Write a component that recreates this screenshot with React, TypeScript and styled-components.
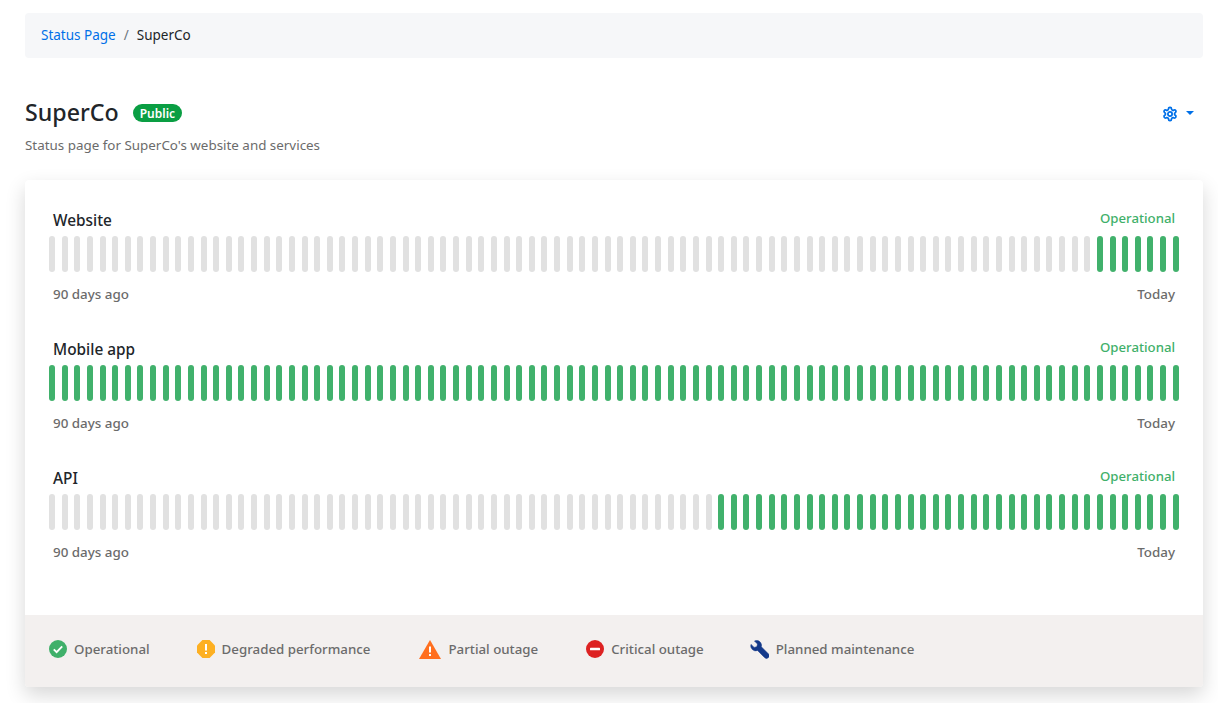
import React from "react";
import styled, { createGlobalStyle } from "styled-components";

const GlobalStyle = createGlobalStyle`
  * {
    box-sizing: border-box;
  }
  body {
    margin: 0;
    background: #ffffff;
    font-family: "Noto Sans", "Liberation Sans", sans-serif;
    color: #212529;
  }
`;

const Page = styled.div`
  width: 1218px;
  height: 703px;
  overflow: hidden;
  padding: 13px 15px 0 25px;
`;

const Breadcrumb = styled.nav`
  display: flex;
  align-items: center;
  height: 45px;
  padding: 0 16px 2px;
  background: #f6f7f9;
  border-radius: 4px;
  font-size: 13.5px;
`;

const Crumb = styled.a`
  color: #0070e8;
`;

const Slash = styled.span`
  color: #6c757d;
  padding: 0 8px;
`;

const Current = styled.span`
  color: #212529;
`;

const Header = styled.header`
  display: flex;
  justify-content: space-between;
  margin-top: 40px;
  height: 82px;
`;

const TitleRow = styled.div`
  display: flex;
  align-items: center;
  gap: 14px;
  height: 30px;
`;

const Title = styled.h1`
  margin: -2px 0 0;
  font-size: 23.2px;
  font-weight: 500;
  line-height: 30px;
  color: #212529;
`;

const Badge = styled.span`
  display: inline-flex;
  align-items: center;
  height: 18px;
  padding: 0 7px;
  border-radius: 9px;
  background: #0a9e43;
  color: #ffffff;
  font-size: 12px;
  font-weight: 600;
`;

const Description = styled.p`
  margin: 8px 0 0;
  font-size: 13.4px;
  line-height: 18px;
  color: #6b6b6b;
`;

const SettingsButton = styled.div`
  display: flex;
  align-items: center;
  gap: 8px;
  height: 18px;
  margin: 7px 9px 0 0;
  color: #0070e8;
`;

const Caret = styled.span`
  width: 0;
  height: 0;
  border-left: 4px solid transparent;
  border-right: 4px solid transparent;
  border-top: 4px solid #0070e8;
  margin-top: -3px;
`;

const Card = styled.section`
  background: #ffffff;
  border-radius: 4px;
  box-shadow: 0 8px 20px rgba(0, 0, 0, 0.16);
  overflow: hidden;
`;

const CardBody = styled.div`
  height: 435px;
  padding: 27px 24px 0;
  display: flex;
  flex-direction: column;
  gap: 29px;
`;

const Service = styled.div`
  height: 100px;
`;

const ServiceHead = styled.div`
  display: flex;
  justify-content: space-between;
  padding: 0 4px;
  height: 29px;
`;

const ServiceName = styled.div`
  font-size: 15.4px;
  font-weight: 500;
  line-height: 28px;
  color: #212529;
`;

const ServiceState = styled.div`
  font-size: 13.2px;
  font-weight: 500;
  line-height: 22px;
  color: #3fb06a;
`;

const Bars = styled.div`
  display: flex;
  justify-content: space-between;
  height: 36px;
`;

const Bar = styled.div<{ $on: boolean }>`
  width: 6px;
  height: 36px;
  border-radius: 3px;
  background: ${(props) => (props.$on ? "#41b16c" : "#e1e1e1")};
`;

const ServiceFoot = styled.div`
  display: flex;
  justify-content: space-between;
  padding: 0 4px;
  margin-top: 13px;
  font-size: 13.4px;
  font-weight: 500;
  line-height: 18px;
  color: #6b6b6b;
`;

const Legend = styled.footer`
  display: flex;
  align-items: center;
  height: 72px;
  padding: 0 24px 4px;
  background: #f3f0ef;
`;

const LegendItem = styled.div<{ $gap: number }>`
  display: flex;
  align-items: center;
  gap: 7px;
  margin-right: ${(props) => props.$gap}px;
  font-size: 13.3px;
  font-weight: 500;
  color: #6b6b6b;
`;

const GearIcon = () => (
  <svg width="16" height="16" viewBox="0 0 24 24" fill="none" stroke="currentColor" strokeWidth="2.6" strokeLinejoin="round">
    <path d="M12.2 2h-.4a2 2 0 0 0-2 2v.2a2 2 0 0 1-1 1.7l-.4.3a2 2 0 0 1-2 0l-.2-.1a2 2 0 0 0-2.7.7l-.2.4a2 2 0 0 0 .7 2.7l.2.1a2 2 0 0 1 1 1.7v.5a2 2 0 0 1-1 1.7l-.2.1a2 2 0 0 0-.7 2.7l.2.4a2 2 0 0 0 2.7.7l.2-.1a2 2 0 0 1 2 0l.4.3a2 2 0 0 1 1 1.7v.2a2 2 0 0 0 2 2h.4a2 2 0 0 0 2-2v-.2a2 2 0 0 1 1-1.7l.4-.3a2 2 0 0 1 2 0l.2.1a2 2 0 0 0 2.7-.7l.2-.4a2 2 0 0 0-.7-2.7l-.2-.1a2 2 0 0 1-1-1.7v-.5a2 2 0 0 1 1-1.7l.2-.1a2 2 0 0 0 .7-2.7l-.2-.4a2 2 0 0 0-2.7-.7l-.2.1a2 2 0 0 1-2 0l-.4-.3a2 2 0 0 1-1-1.7V4a2 2 0 0 0-2-2z" />
    <circle cx="12" cy="12" r="3.2" />
  </svg>
);

const CheckIcon = () => (
  <svg width="18" height="18" viewBox="0 0 18 18">
    <circle cx="9" cy="9" r="9" fill="#3fb06a" />
    <path d="M4.8 9.4l2.8 2.8 5.6-5.8" fill="none" stroke="#ffffff" strokeWidth="1.9" />
  </svg>
);

const WarnIcon = () => (
  <svg width="18" height="18" viewBox="0 0 18 18">
    <path d="M5.4 0h7.2L18 5.4v7.2L12.6 18H5.4L0 12.6V5.4z" fill="#fdb022" />
    <rect x="8" y="4" width="2" height="6.5" fill="#ffffff" />
    <rect x="8" y="12" width="2" height="2" fill="#ffffff" />
  </svg>
);

const TriangleIcon = () => (
  <svg width="22" height="19" viewBox="0 0 22 19">
    <path d="M11 0L22 19H0z" fill="#ff6f1f" />
    <rect x="10" y="6.5" width="2" height="6" fill="#ffffff" />
    <rect x="10" y="14" width="2" height="2" fill="#ffffff" />
  </svg>
);

const BlockIcon = () => (
  <svg width="18" height="18" viewBox="0 0 18 18">
    <circle cx="9" cy="9" r="9" fill="#dd2222" />
    <rect x="4" y="7.7" width="10" height="2.6" rx="0.6" fill="#ffffff" />
  </svg>
);

const WrenchIcon = () => (
  <svg width="19" height="19" viewBox="0 0 19 19">
    <path
      d="M6.7 0.4a5 5 0 0 1 4.6 6.4l7 7a2.6 2.6 0 0 1-3.7 3.8l-7-7.1A5 5 0 0 1 1 4.4l3.1 3 2.8-.6.6-2.8-3-3a5 5 0 0 1 2.2-.6z"
      fill="#14398a"
      stroke="#14398a"
      strokeWidth="0.6"
    />
  </svg>
);

const services = [
  { name: "Website", active: 7 },
  { name: "Mobile app", active: 90 },
  { name: "API", active: 37 },
];

const legend = [
  { label: "Operational", icon: <CheckIcon />, gap: 47 },
  { label: "Degraded performance", icon: <WarnIcon />, gap: 49 },
  { label: "Partial outage", icon: <TriangleIcon />, gap: 48 },
  { label: "Critical outage", icon: <BlockIcon />, gap: 46 },
  { label: "Planned maintenance", icon: <WrenchIcon />, gap: 0 },
];

export default function App() {
  return (
    <>
      <GlobalStyle />
      <Page>
        <Breadcrumb>
          <Crumb>Status Page</Crumb>
          <Slash>/</Slash>
          <Current>SuperCo</Current>
        </Breadcrumb>
        <Header>
          <div>
            <TitleRow>
              <Title>SuperCo</Title>
              <Badge>Public</Badge>
            </TitleRow>
            <Description>Status page for SuperCo's website and services</Description>
          </div>
          <SettingsButton>
            <GearIcon />
            <Caret />
          </SettingsButton>
        </Header>
        <Card>
          <CardBody>
            {services.map((service) => (
              <Service key={service.name}>
                <ServiceHead>
                  <ServiceName>{service.name}</ServiceName>
                  <ServiceState>Operational</ServiceState>
                </ServiceHead>
                <Bars>
                  {Array.from({ length: 90 }, (_, i) => (
                    <Bar key={i} $on={i >= 90 - service.active} />
                  ))}
                </Bars>
                <ServiceFoot>
                  <span>90 days ago</span>
                  <span>Today</span>
                </ServiceFoot>
              </Service>
            ))}
          </CardBody>
          <Legend>
            {legend.map((item) => (
              <LegendItem key={item.label} $gap={item.gap}>
                {item.icon}
                {item.label}
              </LegendItem>
            ))}
          </Legend>
        </Card>
      </Page>
    </>
  );
}
